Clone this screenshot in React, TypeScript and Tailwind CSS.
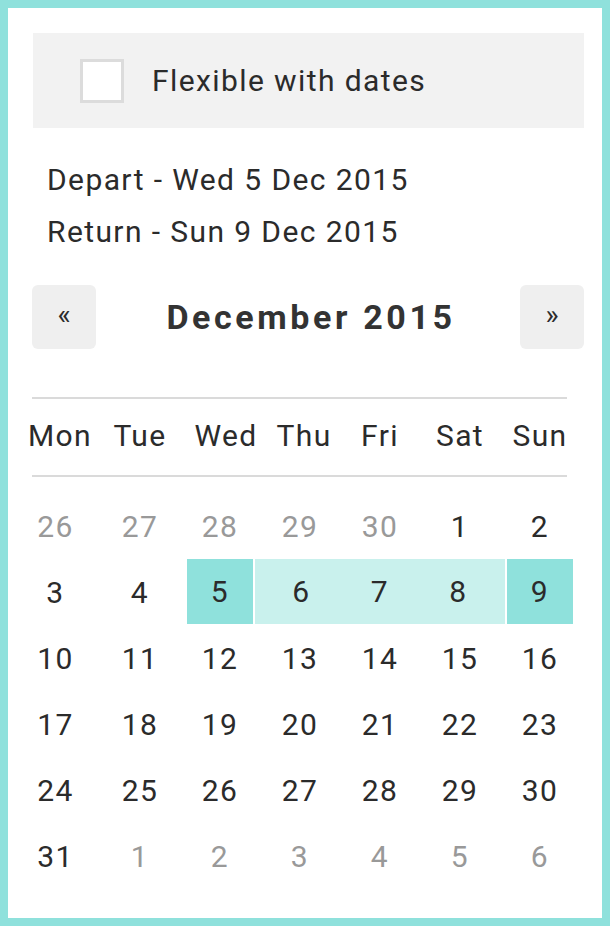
import React from 'react';

type Day = { n: number; muted?: boolean; kind?: 'edge' | 'range' };

const weekdays = ['Mon', 'Tue', 'Wed', 'Thu', 'Fri', 'Sat', 'Sun'];
// small nudges so the headings sit where the design has them
const headShift = ['', '', 'pl-[12px]', 'pl-[8px]', '', '', ''];

const weeks: Day[][] = [
  [{ n: 26, muted: true }, { n: 27, muted: true }, { n: 28, muted: true }, { n: 29, muted: true }, { n: 30, muted: true }, { n: 1 }, { n: 2 }],
  [{ n: 3 }, { n: 4 }, { n: 5, kind: 'edge' }, { n: 6, kind: 'range' }, { n: 7, kind: 'range' }, { n: 8, kind: 'range' }, { n: 9, kind: 'edge' }],
  [10, 11, 12, 13, 14, 15, 16].map((n) => ({ n })),
  [17, 18, 19, 20, 21, 22, 23].map((n) => ({ n })),
  [24, 25, 26, 27, 28, 29, 30].map((n) => ({ n })),
  [{ n: 31 }, { n: 1, muted: true }, { n: 2, muted: true }, { n: 3, muted: true }, { n: 4, muted: true }, { n: 5, muted: true }, { n: 6, muted: true }],
];

function DayCell({ day, col }: { day: Day; col: number }) {
  let box = 'mx-[7px] h-[66px]';
  if (day.kind === 'edge') box = 'mx-[7px] h-[65px] bg-[#8fe1dc]';
  if (day.kind === 'range') {
    box = 'h-[65px] bg-[#c9f1ed]';
    if (col === 3) box += ' -ml-[5px] pl-[8px]';
    if (col === 5) box += ' -mr-[5px] pr-[8px]';
  }
  return (
    <div className="h-[66px]">
      <div className={`${box} flex items-center justify-center`}>
        <span className={`${day.muted ? 'text-[#999999]' : 'text-[#2b2b2b]'} ${col === 0 ? 'pr-[9px]' : ''}`}>
          {day.n}
        </span>
      </div>
    </div>
  );
}

export default function App() {
  return (
    <div
      className="w-[610px] h-[926px] border-[8px] border-[#8fe1dc] bg-white text-[#2b2b2b] text-[30px] tracking-[1.4px]"
      style={{ fontFamily: 'Roboto, "Liberation Sans", sans-serif' }}
    >
      <div className="pl-[25px] pr-[18px] pt-[25px]">
        <div className="h-[95px] bg-[#f2f2f2] flex items-center pl-[47px]">
          <div className="w-[44px] h-[44px] border-[3px] border-[#dcdcdc] bg-white" />
          <span className="ml-[28px]">Flexible with dates</span>
        </div>

        <div className="mt-[26px] pl-[14px] leading-[52px]">
          <div>Depart - Wed 5 Dec 2015</div>
          <div>Return - Sun 9 Dec 2015</div>
        </div>

        <div className="mt-[27px] flex items-center justify-between -ml-px">
          <button className="w-[64px] h-[64px] rounded-[6px] bg-[#efefef] text-[28px] tracking-normal flex items-center justify-center pb-[5px]">
            «
          </button>
          <div className="text-[34px] font-bold tracking-[3.6px] text-[#333333] ml-[6px]">December 2015</div>
          <button className="w-[64px] h-[64px] rounded-[6px] bg-[#efefef] text-[28px] tracking-normal flex items-center justify-center pb-[5px]">
            »
          </button>
        </div>

        <div className="mt-[48px] w-[535px] -ml-px border-t-2 border-[#dadada]" />
        <div className="-ml-[13px] w-[560px] grid grid-cols-7 h-[76px] items-center pb-[4px]">
          {weekdays.map((d, i) => (
            <div key={d} className={`text-center ${headShift[i]}`}>{d}</div>
          ))}
        </div>
        <div className="w-[535px] -ml-px border-t-2 border-[#dadada]" />

        <div className="mt-[16px] -ml-[13px] w-[560px] grid grid-cols-7">
          {weeks.map((week, wi) =>
            week.map((day, ci) => <DayCell key={`${wi}-${ci}`} day={day} col={ci} />)
          )}
        </div>
      </div>
    </div>
  );
}
